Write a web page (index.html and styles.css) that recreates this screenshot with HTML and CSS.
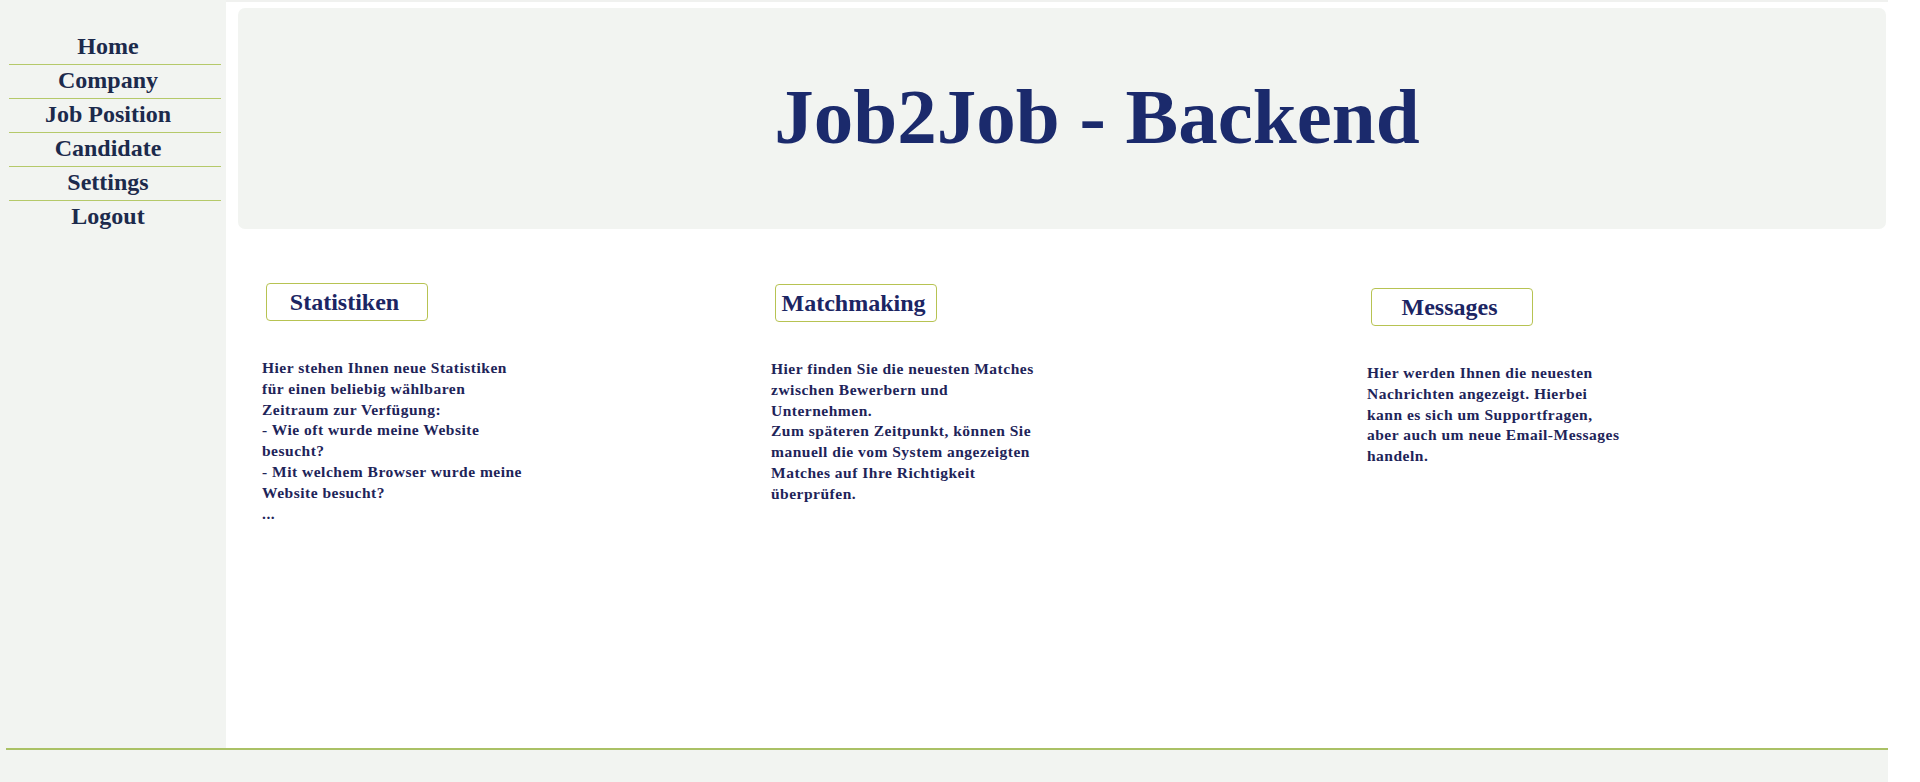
FILE: index.html
```
<!DOCTYPE html>
<html lang="de">
<head>
<meta charset="utf-8">
<title>Job2Job - Backend</title>
<link rel="stylesheet" href="styles.css">
</head>
<body>
<div class="page">
  <div class="layout">
    <aside class="sidebar">
      <nav class="nav">
        <a class="nav-item" href="#">Home</a>
        <a class="nav-item" href="#">Company</a>
        <a class="nav-item" href="#">Job Position</a>
        <a class="nav-item" href="#">Candidate</a>
        <a class="nav-item" href="#">Settings</a>
        <a class="nav-item nav-item-last" href="#">Logout</a>
      </nav>
    </aside>
    <main class="main">
      <header class="header">
        <h1 class="title">Job2Job - Backend</h1>
      </header>
      <section class="columns">
        <div class="col">
          <div class="tag">Statistiken</div>
          <p class="text">Hier stehen Ihnen neue Statistiken<br>für einen beliebig wählbaren<br>Zeitraum zur Verfügung:<br>- Wie oft wurde meine Website<br>besucht?<br>- Mit welchem Browser wurde meine<br>Website besucht?<br>...</p>
        </div>
        <div class="col col-2">
          <div class="tag">Matchmaking</div>
          <p class="text">Hier finden Sie die neuesten Matches<br>zwischen Bewerbern und<br>Unternehmen.<br>Zum späteren Zeitpunkt, können Sie<br>manuell die vom System angezeigten<br>Matches auf Ihre Richtigkeit<br>überprüfen.</p>
        </div>
        <div class="col col-3">
          <div class="tag">Messages</div>
          <p class="text">Hier werden Ihnen die neuesten<br>Nachrichten angezeigt. Hierbei<br>kann es sich um Supportfragen,<br>aber auch um neue Email-Messages<br>handeln.</p>
        </div>
      </section>
    </main>
  </div>
  <footer class="footer">
    <div class="footer-line"></div>
  </footer>
</div>
</body>
</html>
```
FILE: styles.css
```
html, body {
  margin: 0;
  padding: 0;
  background: #ffffff;
}

body {
  font-family: "Liberation Serif", "Times New Roman", serif;
  font-weight: bold;
}

.page {
  width: 1888px;
}

.layout {
  display: flex;
  height: 748px;
}

.sidebar {
  width: 226px;
  flex: 0 0 226px;
  background: #f2f4f1;
  padding-top: 31px;
  box-sizing: border-box;
}

.nav {
  display: flex;
  flex-direction: column;
  margin: 0 5px 0 9px;
}

.nav-item {
  display: block;
  text-align: center;
  text-decoration: none;
  color: #1c2a4c;
  font-size: 24px;
  line-height: 29px;
  padding: 1px 14px 3px 0;
  border-bottom: 1px solid #b5c96a;
}

.nav-item-last {
  border-bottom: none;
}

.main {
  flex: 1;
  border-top: 2px solid #f0f1ef;
  display: flex;
  flex-direction: column;
}

.header {
  margin: 6px 2px 0 12px;
  height: 221px;
  background: #f2f4f1;
  border-radius: 7px;
  display: flex;
  align-items: center;
  justify-content: center;
  padding: 0 0 4px 70px;
  box-sizing: border-box;
}

.title {
  margin: 0;
  font-size: 79px;
  font-weight: bold;
  color: #1b2a6c;
  line-height: 1;
}

.columns {
  display: grid;
  grid-template-columns: 509px 596px 1fr;
  padding: 54px 0 0 36px;
}

.col-3 {
  padding-top: 5px;
}

.col-2 {
  padding-top: 1px;
}

.tag {
  width: 162px;
  height: 38px;
  box-sizing: border-box;
  margin-left: 4px;
  padding-right: 5px;
  border: 1px solid #b7c352;
  border-radius: 4px;
  display: flex;
  align-items: center;
  justify-content: center;
  font-size: 24px;
  color: #1c2563;
}

.text {
  margin: 37px 0 0 0;
  font-size: 15.5px;
  letter-spacing: 0.5px;
  line-height: 20.8px;
  color: #1e2459;
}

.footer {
  height: 34px;
  background: #f2f4f1;
  padding-left: 6px;
}

.footer-line {
  border-top: 2px solid #aac165;
}
```
